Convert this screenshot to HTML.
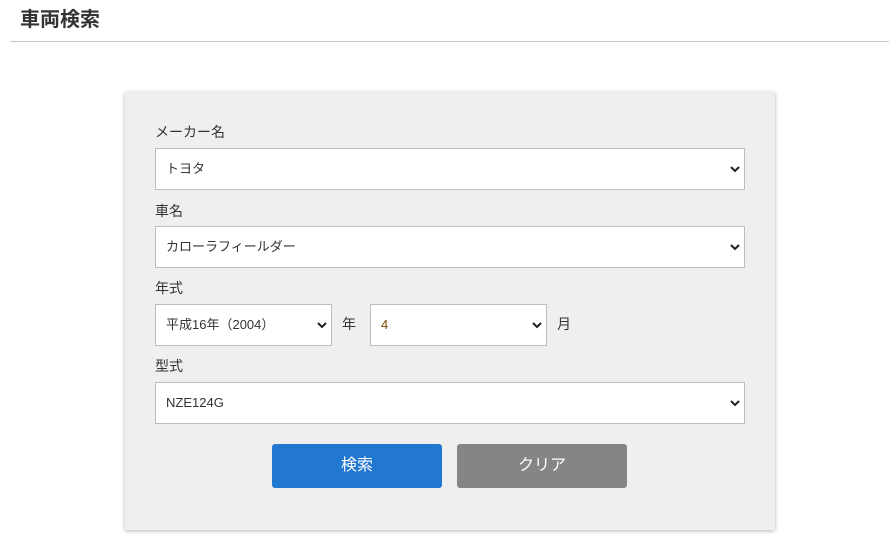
<!DOCTYPE html>
<html><head><meta charset="utf-8"><style>
*{box-sizing:border-box;margin:0;padding:0}
body{width:891px;height:546px;background:#fff;font-family:"Liberation Sans","Noto Sans CJK JP",sans-serif;color:#333;position:relative;overflow:hidden}
.abs{position:absolute}
h1{position:absolute;left:20px;top:7px;font-size:20px;font-weight:bold;color:#333;line-height:26px}
.line{left:10px;top:41px;width:879px;height:1px;background:#c6c6c6}
.panel{left:125px;top:92px;width:650px;height:438px;background:#efefef;box-shadow:0 1px 4px rgba(0,0,0,.3);border-radius:2px}
.lbl{font-size:14px;line-height:20px;color:#333}
.sel{background:#fff;border:1px solid #bdbdbd;height:42px;font-size:13px;line-height:40px;padding-left:10px;color:#333}
.sel svg{position:absolute;right:4px;top:16px}
.btn{height:44px;top:444px;border-radius:3px;color:#fff;font-size:16px;line-height:44px;text-align:center}
</style></head><body>
<h1>車両検索</h1>
<div class="abs line"></div>
<div class="abs panel"></div>
<div class="abs lbl" style="left:155px;top:122px">メーカー名</div>
<div class="abs sel" style="left:155px;top:148px;width:590px">トヨタ<svg width="10" height="8" viewBox="0 0 10 8"><path d="M1 2l4 4 4-4" fill="none" stroke="#222" stroke-width="2"/></svg></div>
<div class="abs lbl" style="left:155px;top:201px">車名</div>
<div class="abs sel" style="left:155px;top:226px;width:590px">カローラフィールダー<svg width="10" height="8" viewBox="0 0 10 8"><path d="M1 2l4 4 4-4" fill="none" stroke="#222" stroke-width="2"/></svg></div>
<div class="abs lbl" style="left:155px;top:278px">年式</div>
<div class="abs sel" style="left:155px;top:304px;width:177px">平成16年（2004）<svg width="10" height="8" viewBox="0 0 10 8"><path d="M1 2l4 4 4-4" fill="none" stroke="#222" stroke-width="2"/></svg></div>
<div class="abs lbl" style="left:342px;top:314px">年</div>
<div class="abs sel" style="left:370px;top:304px;width:177px;color:#7a4a00">4<svg width="10" height="8" viewBox="0 0 10 8"><path d="M1 2l4 4 4-4" fill="none" stroke="#222" stroke-width="2"/></svg></div>
<div class="abs lbl" style="left:557px;top:314px">月</div>
<div class="abs lbl" style="left:155px;top:356px">型式</div>
<div class="abs sel" style="left:155px;top:382px;width:590px">NZE124G<svg width="10" height="8" viewBox="0 0 10 8"><path d="M1 2l4 4 4-4" fill="none" stroke="#222" stroke-width="2"/></svg></div>
<div class="abs btn" style="left:272px;width:170px;background:#2277d0">検索</div>
<div class="abs btn" style="left:457px;width:170px;background:#858585">クリア</div>
</body></html>
